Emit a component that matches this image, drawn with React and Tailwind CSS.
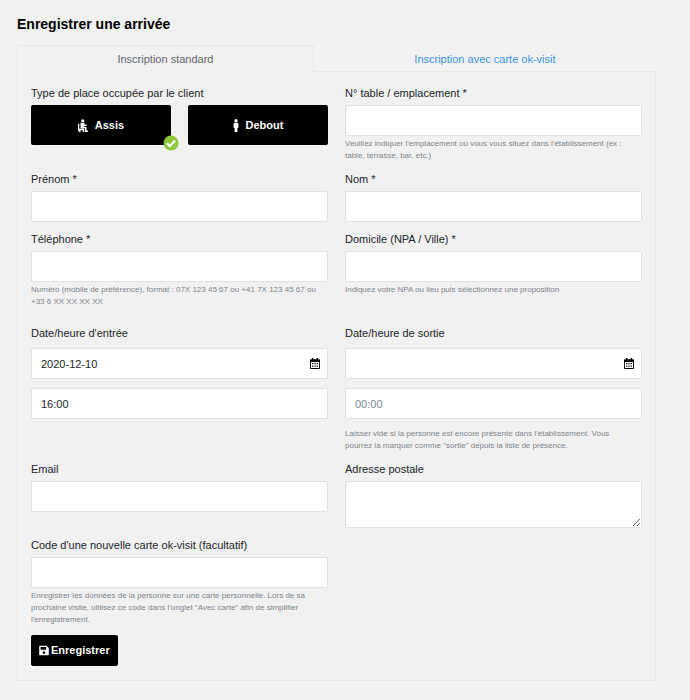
import { useState } from "react";
import { FaMale, FaSave } from "react-icons/fa";

const inputClass = "block w-full h-[31px] px-[9px] text-[11px] text-[#212529] bg-white border border-[#dee2e6] rounded-[1px] placeholder:text-[#7d858c] focus:outline-none focus:border-[#80bdff]"

const SeatedIcon = () => (
  <svg viewBox="0 0 20 26" className="w-[10px] h-[13px]" fill="currentColor" aria-hidden="true">
    <circle cx="9.500" cy="3.500" r="3.200" />
    <path d="M5 7.500h7.500l1.500 4h3.500v2.500h-5v2h4.500v6.500h2.500V26h-5.500v-7H5z" />
    <path d="M0 9.500h2.500v10H12v3H5V26H1.500l-1.500-6z" />
    <path d="M9.500 21h3v5h-3z" />
  </svg>
)

const CalendarIcon = () => (
  <svg viewBox="0 0 20 22" className="absolute right-[8px] top-[10px] w-[10px] h-[11px] text-black" fill="currentColor" aria-hidden="true">
    <path d="M4 0h3v3H4zM13 0h3v3h-3z" />
    <path fillRule="evenodd" d="M2 2.500h16a2 2 0 0 1 2 2V20a2 2 0 0 1-2 2H2a2 2 0 0 1-2-2V4.500a2 2 0 0 1 2-2zM1.800 8v12.200h16.400V8z" />
    <path d="M4.200 10.200h2.500v2.500H4.200zM8.800 10.200h2.500v2.500H8.800zM13.300 10.200h2.500v2.500h-2.500zM4.200 15.200h2.500v2.500H4.200zM8.800 15.200h2.500v2.500H8.800zM13.300 15.200h2.500v2.500h-2.500z" />
  </svg>
)

const CheckBadge = () => (
  <svg viewBox="0 0 16 16" className="absolute -right-[8px] -bottom-[6px] w-4 h-4" aria-hidden="true">
    <circle cx="8" cy="8" r="7.500" fill="#8cc63f" />
    <path d="M3.800 8.200l3 2.800 5.400-5.400" fill="none" stroke="#fff" strokeWidth="2.200" />
  </svg>
)

const Help = ({ children }) => (
  <p className="mt-[2px] pr-2 text-[8px] leading-3 text-[#7d858c]">{children}</p>
)

const Field = ({ id, label, help, children }) => (
  <div>
    <label htmlFor={id} className="block mb-[3px] text-[11px] leading-[17px]">{label}</label>
    {children || <input id={id} name={id} type="text" className={inputClass} />}
    {help && <Help>{help}</Help>}
  </div>
)

const DateTimeField = ({ id, label, date, time, help }) => (
  <div className="pt-2">
    <label htmlFor={id} className="block mb-[6px] text-[11px] leading-[17px]">{label}</label>
    <div className="relative mb-[9px]">
      <input id={id} name={id} type="text" defaultValue={date} className={inputClass} />
      <CalendarIcon />
    </div>
    <input
      name={`${id}-heure`}
      type="text"
      aria-label={`${label} (heure)`}
      placeholder="00:00"
      defaultValue={time}
      className={inputClass}
    />
    {help && <div className="pt-[7px]"><Help>{help}</Help></div>}
  </div>
)

const PlaceButton = ({ icon, text, selected, onClick }) => (
  <button
    type="button"
    aria-pressed={selected}
    onClick={onClick}
    className="relative flex flex-1 h-10 items-center justify-center gap-[7px] bg-black text-white text-[11px] font-bold rounded-[2px]"
  >
    {icon}
    {text}
    {selected && <CheckBadge />}
  </button>
)

const App = () => {
  const [place, setPlace] = useState("assis")

  return (
    <div className="min-h-screen bg-[#f1f1f1] pt-[14px] pb-[19px] pl-[17px] pr-[34px] font-['Liberation_Sans',Arial,sans-serif] text-[#212529]">
      <h1 className="mb-[11px] text-[14px] leading-5 font-bold text-black">Enregistrer une arrivée</h1>

      <nav className="flex text-center text-[11px] leading-[26px]">
        <a href="#standard" className="flex-auto h-[27px] -mb-px z-10 bg-[#f1f1f1] border border-b-0 border-[#e6e6e6] rounded-t-[2px] text-[#5f666d]">
          Inscription standard
        </a>
        <a href="#carte" className="flex-auto h-[27px] -mb-px border border-transparent text-[#3c96e8]">
          Inscription avec carte ok-visit
        </a>
      </nav>

      <form className="border border-[#e6e6e6] px-[13px] pt-[13px] pb-[14px]" onSubmit={(e) => e.preventDefault()}>
        <div className="grid grid-cols-2 gap-x-[17px] gap-y-[9px]">
          <div>
            <p className="mb-[3px] text-[11px] leading-[17px]">Type de place occupée par le client</p>
            <div className="flex gap-[17px]">
              <PlaceButton icon={<SeatedIcon />} text="Assis" selected={place === "assis"} onClick={() => setPlace("assis")} />
              <PlaceButton icon={<FaMale className="w-[6px] h-[13px]" />} text="Debout" selected={place === "debout"} onClick={() => setPlace("debout")} />
            </div>
          </div>
          <Field
            id="table"
            label="N° table / emplacement *"
            help="Veuillez indiquer l'emplacement où vous vous situez dans l'établissement (ex : table, terrasse, bar, etc.)"
          />

          <Field id="prenom" label="Prénom *" />
          <Field id="nom" label="Nom *" />

          <Field
            id="telephone"
            label="Téléphone *"
            help="Numéro (mobile de préférence), format : 07X 123 45 67 ou +41 7X 123 45 67 ou +33 6 XX XX XX XX"
          />
          <Field
            id="domicile"
            label="Domicile (NPA / Ville) *"
            help="Indiquez votre NPA ou lieu puis sélectionnez une proposition"
          />

          <DateTimeField id="entree" label="Date/heure d'entrée" date="2020-12-10" time="16:00" />
          <DateTimeField
            id="sortie"
            label="Date/heure de sortie"
            help={'Laisser vide si la personne est encore présente dans l\'établissement. Vous pourrez la marquer comme "sortie" depuis la liste de présence.'}
          />

          <Field id="email" label="Email" />
          <Field id="adresse" label="Adresse postale">
            <textarea
              id="adresse"
              name="adresse"
              className="block w-full h-[47px] px-[9px] py-[6px] text-[11px] bg-white border border-[#dee2e6] rounded-[1px] resize-y focus:outline-none focus:border-[#80bdff]"
            />
          </Field>

          <Field
            id="code"
            label="Code d'une nouvelle carte ok-visit (facultatif)"
            help={'Enregistrer les données de la personne sur une carte personnelle. Lors de sa prochaine visite, utilisez ce code dans l\'onglet "Avec carte" afin de simplifier l\'enregistrement.'}
          />
        </div>

        <button type="submit" className="mt-[9px] flex h-[31px] items-center gap-[2px] px-[8px] bg-black text-white text-[11px] font-bold rounded-[2px]">
          <FaSave className="w-[10px] h-[11px]" />
          Enregistrer
        </button>
      </form>
    </div>
  )
}

export default App
